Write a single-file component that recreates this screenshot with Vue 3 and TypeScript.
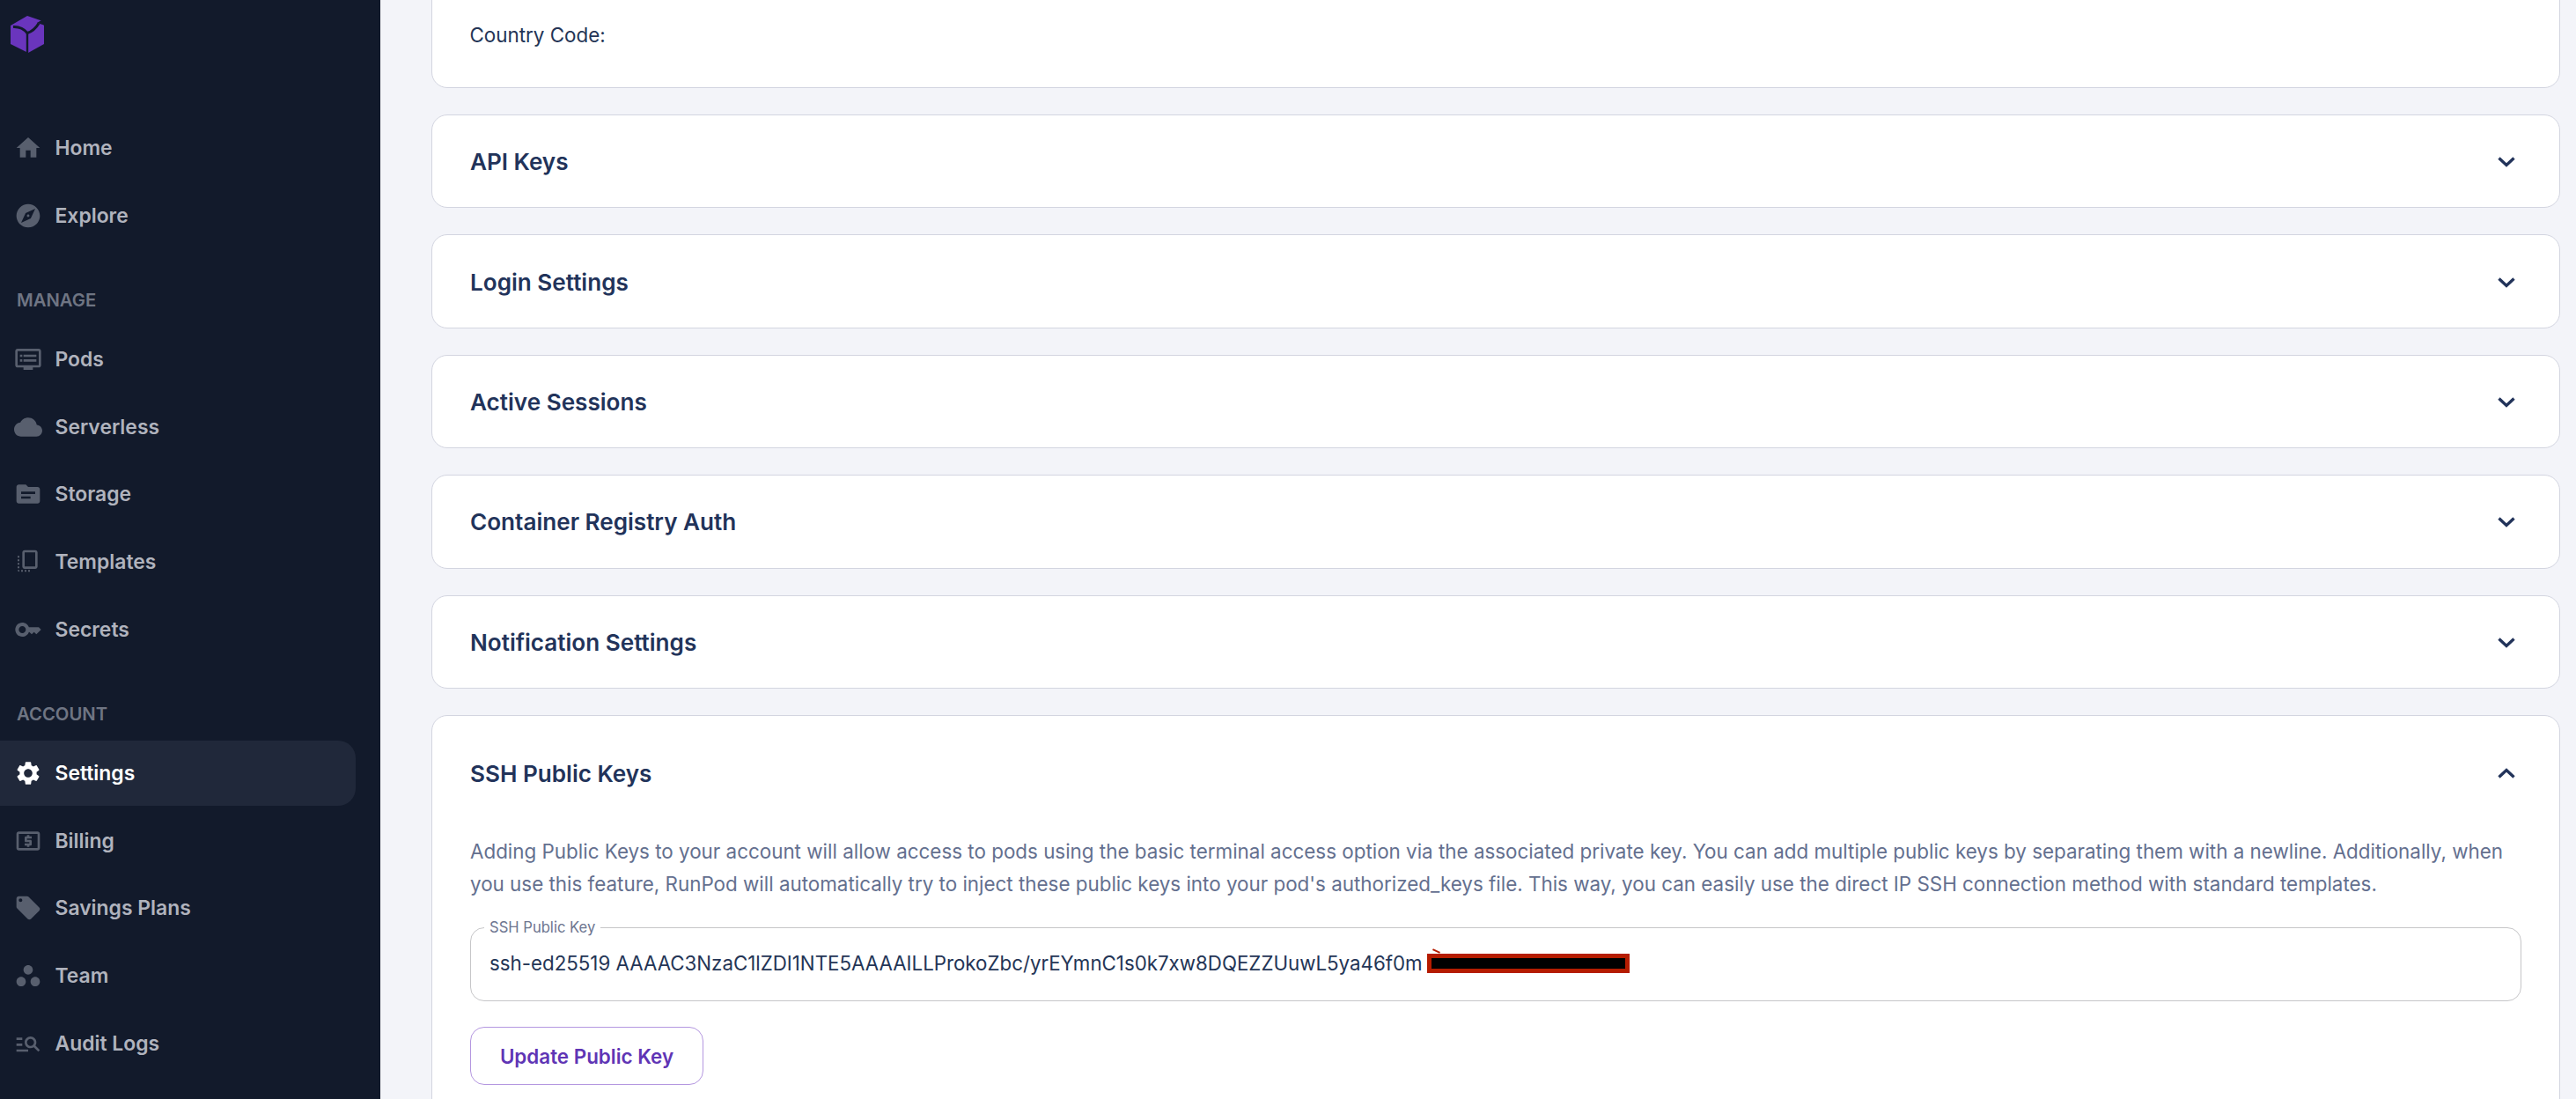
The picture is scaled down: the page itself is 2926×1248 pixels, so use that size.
<script setup lang="ts">
interface NavItem { label: string; path: string; active?: boolean }
interface NavGroup { title?: string; items: NavItem[] }

const groups: NavGroup[] = [
  { items: [
    { label: 'Home', path: 'M10 20v-6h4v6h5v-8h3L12 3 2 12h3v8z' },
    { label: 'Explore', path: 'M12 10.9c-.61 0-1.1.49-1.1 1.1s.49 1.1 1.1 1.1c.61 0 1.1-.49 1.1-1.1s-.49-1.1-1.1-1.1zM12 2C6.48 2 2 6.48 2 12s4.48 10 10 10 10-4.48 10-10S17.52 2 12 2zm2.19 12.19L6 18l3.81-8.19L18 6l-3.81 8.19z' },
  ] },
  { title: 'MANAGE', items: [
    { label: 'Pods', path: 'M21 3H3c-1.1 0-2 .9-2 2v12c0 1.1.9 2 2 2h5v2h8v-2h5c1.1 0 1.99-.9 1.99-2L23 5c0-1.1-.9-2-2-2zm0 14H3V5h18v12zm-2-9H8v2h11V8zm0 4H8v2h11v-2zM7 8H5v2h2V8zm0 4H5v2h2v-2z' },
    { label: 'Serverless', path: 'M19.35 10.04C18.67 6.59 15.64 4 12 4 9.11 4 6.6 5.64 5.35 8.04 2.34 8.36 0 10.91 0 14c0 3.31 2.69 6 6 6h13c2.76 0 5-2.24 5-5 0-2.64-2.05-4.78-4.65-4.96z' },
    { label: 'Storage', path: 'M20 6h-8l-2-2H4c-1.1 0-1.99.9-1.99 2L2 18c0 1.1.9 2 2 2h16c1.1 0 2-.9 2-2V8c0-1.1-.9-2-2-2zm-6 10H6v-2h8v2zm4-4H6v-2h12v2z' },
    { label: 'Templates', path: 'M9 2h9c1.1 0 2 .9 2 2v12c0 1.1-.9 2-2 2H9c-1.1 0-2-.9-2-2V4c0-1.1.9-2 2-2zm0 2v12h9V4H9zM3 7h1.5v1.5H3V7zm0 3h1.5v1.5H3V10zm0 3h1.5v1.5H3V13zm0 3h1.5v1.5H3V16zm0 3h1.5v1.5C3.7 20.500 3 20 3 19zm3 0h1.500v1.500H6V19zm3 0h1.500v1.500H9V19zm3 0h1.500v1.500H12V19z' },
    { label: 'Secrets', path: 'M21 10h-8.35C11.83 7.67 9.61 6 7 6c-3.31 0-6 2.69-6 6s2.69 6 6 6c2.61 0 4.83-1.67 5.65-4H13l2 2 2-2 2 2 4-4.040L21 10zM7 15c-1.65 0-3-1.35-3-3s1.35-3 3-3 3 1.350 3 3-1.350 3-3 3z' },
  ] },
  { title: 'ACCOUNT', items: [
    { label: 'Settings', active: true, path: 'M19.14 12.94c.04-.3.06-.61.06-.94 0-.32-.02-.64-.07-.94l2.03-1.58c.18-.14.23-.41.12-.61l-1.92-3.32c-.12-.22-.37-.29-.59-.22l-2.39.96c-.5-.38-1.03-.7-1.62-.94l-.36-2.54c-.04-.24-.24-.41-.48-.41h-3.84c-.24 0-.43.17-.47.41l-.36 2.54c-.59.24-1.13.57-1.62.94l-2.39-.96c-.22-.08-.47 0-.59.22L2.74 8.87c-.12.21-.08.47.12.61l2.03 1.58c-.05.3-.09.63-.09.94s.02.64.07.94l-2.03 1.58c-.18.14-.23.41-.12.61l1.92 3.32c.12.22.37.29.59.22l2.39-.96c.5.38 1.03.7 1.62.94l.36 2.54c.05.24.24.41.48.41h3.84c.24 0 .44-.17.47-.41l.36-2.54c.59-.24 1.13-.56 1.62-.94l2.39.96c.22.08.47 0 .59-.22l1.92-3.32c.12-.22.07-.47-.12-.61l-2.01-1.58zM12 15.600c-1.980 0-3.600-1.620-3.600-3.600s1.620-3.600 3.600-3.600 3.600 1.620 3.600 3.600-1.620 3.600-3.600 3.600z' },
    { label: 'Billing', path: 'M11 17h2v-1h1c.55 0 1-.45 1-1v-3c0-.55-.45-1-1-1h-3v-1h4V8h-2V7h-2v1h-1c-.55 0-1 .45-1 1v3c0 .55.45 1 1 1h3v1H9v2h2v1zm9-13H4c-1.11 0-1.99.89-1.99 2L2 18c0 1.11.89 2 2 2h16c1.11 0 2-.89 2-2V6c0-1.11-.89-2-2-2zm0 14H4V6h16v12z' },
    { label: 'Savings Plans', path: 'M21.41 11.58l-9-9C12.05 2.22 11.55 2 11 2H4c-1.1 0-2 .9-2 2v7c0 .55.22 1.05.59 1.42l9 9c.36.36.86.58 1.41.58.55 0 1.05-.22 1.41-.59l7-7c.37-.36.59-.86.59-1.41 0-.55-.23-1.06-.59-1.42zM5.500 7C4.670 7 4 6.330 4 5.500S4.670 4 5.500 4 7 4.670 7 5.500 6.330 7 5.500 7z' },
    { label: 'Team', path: 'M6 13c-2.2 0-4 1.8-4 4s1.8 4 4 4 4-1.8 4-4-1.8-4-4-4zm6-10C9.8 3 8 4.8 8 7s1.8 4 4 4 4-1.8 4-4-1.8-4-4-4zm6 10c-2.2 0-4 1.8-4 4s1.8 4 4 4 4-1.8 4-4-1.8-4-4-4z' },
    { label: 'Audit Logs', path: 'M7 9H2V7h5v2zm0 3H2v2h5v-2zm13.590 7-3.830-3.830c-.8.52-1.740.83-2.760.83-2.760 0-5-2.240-5-5s2.240-5 5-5 5 2.240 5 5c0 1.020-.31 1.960-.83 2.750L22 17.590 20.590 19zM17 11c0-1.650-1.350-3-3-3s-3 1.350-3 3 1.350 3 3 3 3-1.350 3-3zM2 19h10v-2H2v2z' },
  ] },
];

const collapsed: string[] = ['API Keys', 'Login Settings', 'Active Sessions', 'Container Registry Auth', 'Notification Settings'];
</script>

<template>
  <div class="page">
    <aside class="sidebar">
      <svg class="logo" viewBox="0 0 38 42" aria-label="RunPod">
        <path fill="#6a35bd" d="M19 0 35 5.500 38 11V32L20 42 0 32V11Z" />
        <path fill="none" stroke="#121a2b" stroke-width="3" d="M3 12.500Q13 12 19 19.500Q27 17 32 8.500" />
        <path fill="none" stroke="#121a2b" stroke-width="2.400" d="M19 19V42" />
        <path fill="#121a2b" d="M35 5 38 5 38 10.500 30 8Z" />
      </svg>
      <nav class="nav">
        <section v-for="(group, g) in groups" :key="g" class="group">
          <h3 v-if="group.title" class="group-title">{{ group.title }}</h3>
          <a v-for="item in group.items" :key="item.label" class="nav-item" :class="{ active: item.active }">
            <svg class="nav-icon" viewBox="0 0 24 24"><path fill="currentColor" fill-rule="evenodd" :d="item.path" /></svg>
            <span>{{ item.label }}</span>
          </a>
        </section>
      </nav>
    </aside>

    <main class="main">
      <div class="card country">
        <p>Country Code:</p>
      </div>

      <div v-for="title in collapsed" :key="title" class="card row">
        <h2>{{ title }}</h2>
        <svg class="chevron" viewBox="0 0 20 13"><path d="M1.500 2.500 10 10.500 18.500 2.500" fill="none" stroke="currentColor" stroke-width="3.400" /></svg>
      </div>

      <div class="card ssh">
        <div class="ssh-head">
          <h2>SSH Public Keys</h2>
          <svg class="chevron" viewBox="0 0 20 13"><path d="M1.500 10.500 10 2.500 18.500 10.500" fill="none" stroke="currentColor" stroke-width="3.400" /></svg>
        </div>
        <p class="desc">Adding Public Keys to your account will allow access to pods using the basic terminal access option via the associated private key. You can add multiple public keys by separating them with a newline. Additionally, when you use this feature, RunPod will automatically try to inject these public keys into your pod's authorized_keys file. This way, you can easily use the direct IP SSH connection method with standard templates.</p>
        <fieldset class="field">
          <legend>SSH Public Key</legend>
          <div class="value">
            <span>ssh-ed25519 AAAAC3NzaC1lZDI1NTE5AAAAILLProkoZbc/yrEYmnC1s0k7xw8DQEZZUuwL5ya46f0m</span>
            <span class="redact"></span>
          </div>
        </fieldset>
        <button class="update" type="button">Update Public Key</button>
      </div>
    </main>
  </div>
</template>

<style>
html, body { margin: 0; overflow: hidden; }
</style>

<style scoped>
.page {
  display: flex;
  width: 2926px;
  height: 1248px;
  overflow: hidden;
  font-family: Inter, "Liberation Sans", sans-serif;
  background: #f3f4f9;
}
.sidebar {
  flex: 0 0 432px;
  background: #121a2b;
  box-sizing: border-box;
  padding-top: 18px;
}
.logo { display: block; width: 38px; height: 42px; margin-left: 12px; }
.nav { margin-top: 71px; padding-right: 28px; }
.group { display: flex; flex-direction: column; gap: 2.600px; }
.group + .group { margin-top: 44px; }
.group-title {
  margin: 0 0 13px 19px;
  font-size: 20.300px;
  line-height: 30px;
  font-weight: 600;
  color: #6f7583;
}
.nav-item {
  display: flex;
  align-items: center;
  gap: 14.500px;
  height: 74px;
  padding-left: 16px;
  border-radius: 0 20px 20px 0;
  font-size: 22.900px;
  font-weight: 600;
  color: #b0b3bd;
}
.nav-icon { width: 32px; height: 32px; flex: none; color: #585f6e; }
.nav-item.active { background: #20283a; color: #ffffff; }
.nav-item.active .nav-icon { color: #ffffff; }

.main {
  flex: 1;
  min-width: 0;
  padding: 0 18px 0 58px;
  display: flex;
  flex-direction: column;
  gap: 30px;
}
.card {
  flex: none;
  box-sizing: border-box;
  background: #fff;
  border: 1.500px solid #d3d5e0;
  border-radius: 18px;
}
.country {
  height: 160px;
  margin-top: -60px;
  padding: 0 42.500px 44px;
  display: flex;
  align-items: flex-end;
}
.country p { margin: 0; font-size: 22.400px; line-height: 30px; color: #243556; }
.row {
  height: 106.400px;
  padding: 1px 50px 0 43px;
  display: flex;
  align-items: center;
  justify-content: space-between;
}
h2 { margin: 0; font-size: 26.100px; font-weight: 600; color: #22335a; }
.chevron { width: 20px; height: 13px; color: #22335a; flex: none; }
.ssh { padding: 0 43px; height: 600px; }
.ssh-head {
  height: 132px;
  padding-right: 7px;
  display: flex;
  align-items: center;
  justify-content: space-between;
}
.desc {
  margin: 3px 0 0;
  font-size: 22.400px;
  line-height: 37px;
  color: #64708f;
}
.field {
  margin: 21.500px 0 0;
  height: 94px;
  box-sizing: border-box;
  padding: 0 21px;
  border: 1.500px solid #c6c6c8;
  border-radius: 16px;
  min-width: 0;
}
.field legend {
  padding: 0 6px;
  margin-left: -6px;
  font-size: 16.600px;
  line-height: 20px;
  color: #6e7690;
}
.value {
  display: flex;
  align-items: center;
  gap: 5px;
  margin-top: 16px;
  font-size: 22.300px;
  line-height: 30px;
  color: #243556;
}
.redact {
  position: relative;
  width: 230px;
  height: 22px;
  box-sizing: border-box;
  background: #000;
  border: 5px solid #b51c00;
}
.redact::before {
  content: "";
  position: absolute;
  left: 1px;
  top: -9px;
  width: 9px;
  height: 2px;
  background: #b51c00;
  transform: rotate(25deg);
}
.update {
  display: block;
  margin-top: 29px;
  width: 265px;
  height: 66px;
  padding: 0;
  white-space: nowrap;
  background: #fff;
  border: 1.500px solid #b497e0;
  border-radius: 16px;
  font-family: inherit;
  font-size: 22.400px;
  font-weight: 600;
  color: #5f35b5;
}
</style>
